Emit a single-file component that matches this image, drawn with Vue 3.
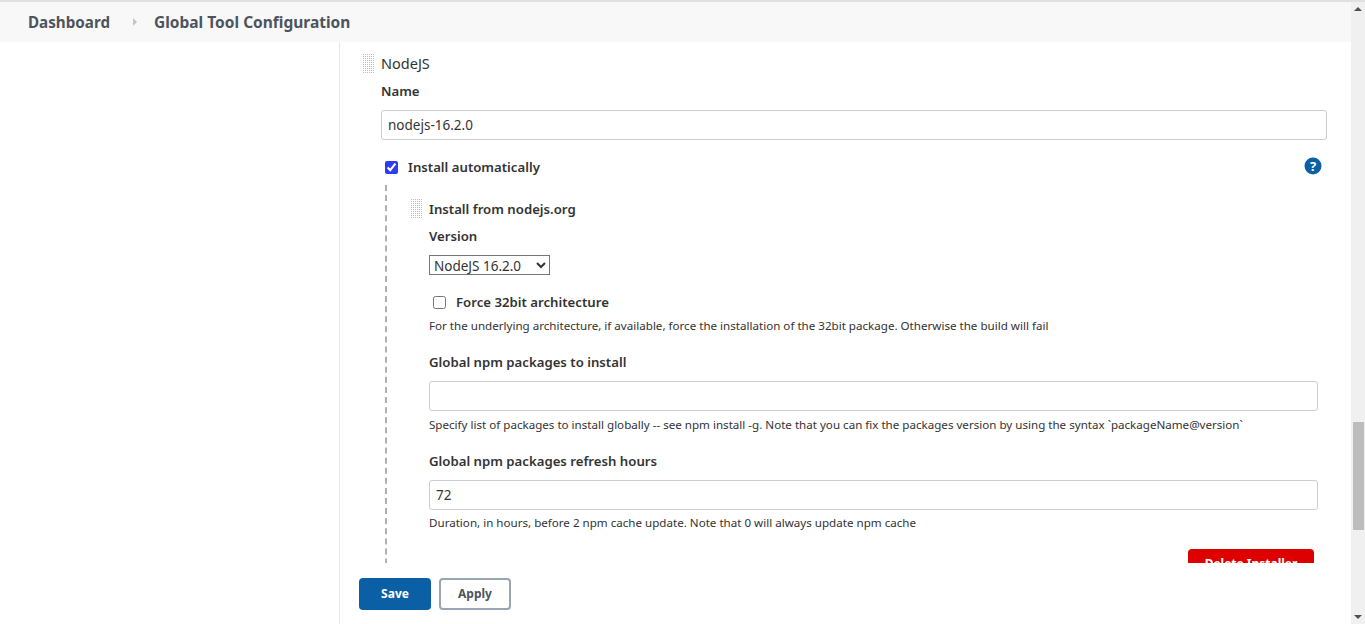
<template>
  <div class="shell">
    <div class="topline"></div>
    <div class="frame">
      <div class="page">
        <div class="breadcrumb">
          <span class="crumb">Dashboard</span>
          <span class="sep"></span>
          <span class="crumb crumb-current">Global Tool Configuration</span>
        </div>
        <div class="body">
          <div class="sidebar"></div>
          <div class="main">
            <div class="content">
              <div class="tool-head">
                <span class="handle"></span>
                <span class="tool-name">NodeJS</span>
              </div>
              <div class="tool-body">
                <div class="label name-label">Name</div>
                <input class="text-input" type="text" value="nodejs-16.2.0" />
                <div class="auto-row">
                  <input class="check" type="checkbox" checked />
                  <span class="label">Install automatically</span>
                  <svg class="help" width="18" height="18" viewBox="0 0 18 18">
                    <circle cx="9" cy="9" r="8.5" fill="#0b5fa5" />
                    <text x="9" y="13.5" text-anchor="middle" class="help-mark">?</text>
                  </svg>
                </div>
                <div class="installer">
                  <div class="installer-head">
                    <span class="handle"></span>
                    <span class="label">Install from nodejs.org</span>
                  </div>
                  <div class="installer-body">
                    <div class="label version-label">Version</div>
                    <select class="version">
                      <option>NodeJS 16.2.0</option>
                    </select>
                    <div class="force-row">
                      <input class="check" type="checkbox" />
                      <span class="label">Force 32bit architecture</span>
                    </div>
                    <p class="desc">For the underlying architecture, if available, force the installation of the 32bit package. Otherwise the build will fail</p>
                    <div class="label field-label">Global npm packages to install</div>
                    <input class="text-input" type="text" />
                    <p class="desc">Specify list of packages to install globally -- see npm install -g. Note that you can fix the packages version by using the syntax `packageName@version`</p>
                    <div class="label field-label">Global npm packages refresh hours</div>
                    <input class="text-input" type="text" value="72" />
                    <p class="desc last-desc">Duration, in hours, before 2 npm cache update. Note that 0 will always update npm cache</p>
                    <div class="delete-row">
                      <button class="btn-delete">Delete Installer</button>
                    </div>
                  </div>
                </div>
              </div>
            </div>
            <div class="footer">
              <button class="btn btn-save">Save</button>
              <button class="btn btn-apply">Apply</button>
            </div>
          </div>
        </div>
      </div>
      <div class="scrollbar">
        <span class="arrow arrow-up"></span>
        <div class="track"><div class="thumb"></div></div>
        <span class="arrow arrow-down"></span>
      </div>
    </div>
  </div>
</template>

<script setup>
</script>

<style>
html, body {
  margin: 0;
  height: 100%;
  overflow: hidden;
  background: #fff;
}
</style>

<style scoped>
.shell {
  width: 1365px;
  height: 624px;
  display: flex;
  flex-direction: column;
  font-family: "Noto Sans", "Open Sans", sans-serif;
  color: #333;
  overflow: hidden;
}
.topline {
  height: 2px;
  flex: none;
  background: #e0e0e0;
}
.frame {
  flex: 1;
  display: flex;
  min-height: 0;
}
.page {
  flex: 1;
  display: flex;
  flex-direction: column;
  min-width: 0;
}
.breadcrumb {
  height: 40px;
  flex: none;
  display: flex;
  align-items: center;
  padding-left: 28px;
  background: #f8f8f8;
}
.crumb {
  font-size: 15.2px;
  font-weight: 700;
  color: #4d545d;
}
.crumb-current {
  font-size: 15.5px;
}
.sep {
  width: 0;
  height: 0;
  margin: 0 17px 0 23px;
  border-left: 4px solid #c4c4c4;
  border-top: 4px solid transparent;
  border-bottom: 4px solid transparent;
}
.body {
  flex: 1;
  display: flex;
  min-height: 0;
}
.sidebar {
  width: 339px;
  flex: none;
  border-right: 1px solid #e6e6e6;
}
.main {
  flex: 1;
  display: flex;
  flex-direction: column;
  min-width: 0;
}
.content {
  flex: 1;
  min-height: 0;
  overflow: hidden;
  padding: 12px 24px 0 22px;
}
.footer {
  height: 61px;
  flex: none;
  box-sizing: border-box;
  display: flex;
  gap: 8px;
  padding: 15px 0 0 19px;
  background: #fff;
}
.tool-head {
  display: flex;
  align-items: center;
  gap: 7px;
  height: 20px;
}
.handle {
  width: 12px;
  height: 20px;
  flex: none;
  background-image: conic-gradient(#bcbcbc 25%, transparent 0);
  background-size: 2px 2px;
}
.tool-name {
  font-size: 14.5px;
  margin-bottom: 2px;
}
.tool-body {
  padding-left: 19px;
}
.label {
  font-size: 13.2px;
  font-weight: 600;
  color: #333;
}
.name-label {
  margin-top: 7px;
  line-height: 20px;
}
.text-input {
  display: block;
  box-sizing: border-box;
  width: 100%;
  height: 30px;
  margin: 9px 0 0;
  padding: 0 6px;
  border: 1px solid #ccc;
  border-radius: 3px;
  background: #fff;
  font-family: inherit;
  font-size: 13.5px;
  color: #333;
}
.auto-row {
  display: flex;
  align-items: center;
  gap: 10px;
  height: 20px;
  margin-top: 17px;
  padding-left: 4px;
}
.check {
  width: 13px;
  height: 13px;
  margin: 0;
  flex: none;
  accent-color: #2d3df0;
}
.help {
  margin: 0 5px 2px auto;
}
.help-mark {
  font-size: 13px;
  font-weight: 700;
  fill: #fff;
}
.installer {
  box-sizing: border-box;
  margin: 8px 9px 0 4px;
  padding: 14px 0 0 23px;
  height: 420px;
  border-left: 2px dashed #b0b0b0;
}
.installer-head {
  display: flex;
  align-items: center;
  gap: 7px;
  height: 20px;
}
.installer-body {
  padding-left: 19px;
}
.version-label {
  margin-top: 7px;
  line-height: 20px;
}
.version {
  display: block;
  width: 121px;
  height: 20px;
  margin-top: 9px;
  padding: 0;
  font-family: inherit;
  font-size: 13.5px;
  color: #333;
  background: #fff;
  border: 1px solid #767676;
  border-radius: 0;
}
.force-row {
  display: flex;
  align-items: center;
  gap: 10px;
  height: 20px;
  margin-top: 17px;
  padding-left: 4px;
}
.desc {
  margin: 4px 0 0;
  font-size: 11.6px;
  line-height: 20px;
  color: #333;
  white-space: nowrap;
}
.last-desc {
  margin-top: 3px;
}
.field-label {
  margin-top: 16px;
  line-height: 20px;
}
.delete-row {
  display: flex;
  justify-content: flex-end;
  margin-top: 16px;
  padding-right: 4px;
}
.btn-delete {
  width: 126px;
  height: 32px;
  padding: 0 0 3px;
  border: none;
  border-radius: 4px;
  background: #de0000;
  color: #fff;
  font-family: inherit;
  font-size: 12px;
  font-weight: 700;
}
.btn {
  width: 72px;
  height: 32px;
  box-sizing: border-box;
  padding: 0 0 2px;
  border-radius: 4px;
  font-family: inherit;
  font-size: 12px;
  font-weight: 700;
}
.btn-save {
  border: none;
  background: #0b5fa5;
  color: #fff;
}
.btn-apply {
  border: 2px solid #98a5b3;
  background: #fff;
  color: #4d545d;
}
.scrollbar {
  width: 14px;
  flex: none;
  display: flex;
  flex-direction: column;
  align-items: center;
  background: #f0f0f0;
}
.arrow {
  width: 0;
  height: 0;
  flex: none;
  border-left: 4px solid transparent;
  border-right: 4px solid transparent;
}
.arrow-up {
  margin: 5px 0;
  border-bottom: 4px solid #505050;
}
.arrow-down {
  margin: 5px 0;
  border-top: 4px solid #505050;
}
.track {
  flex: 1;
  width: 100%;
  padding-top: 406px;
  box-sizing: border-box;
}
.thumb {
  width: 11px;
  height: 108px;
  margin-left: 2px;
  background: #bdbdbd;
}
</style>
